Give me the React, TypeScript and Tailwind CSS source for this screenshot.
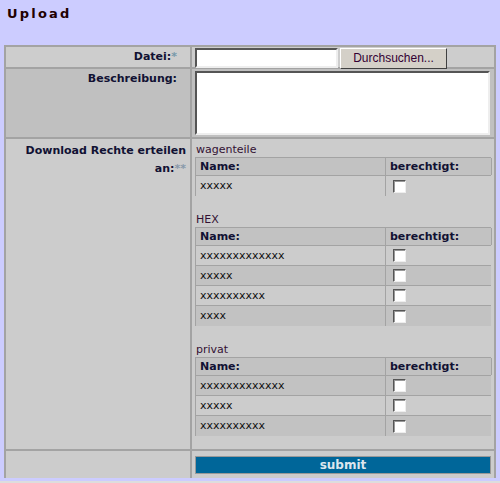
import React from "react";

const Cb = () => (
  <span className="block w-[13px] h-[13px] bg-white border border-t-[#555] border-l-[#555] border-b-[#eee] border-r-[#eee] shadow-[inset_1px_1px_0_#999]" />
);

type Row = { name: string; dark: boolean };

const Sub = ({ title, rows, mt }: { title: string; rows: Row[]; mt: string }) => (
  <div className={mt}>
    <div className="h-[15px] leading-[15px] text-[11px] text-[#331133] pl-[1px]">{title}</div>
    <div className="w-[296px] border-l border-t border-[#a3a3a3]">
      <div className="grid grid-cols-[190px_106px] h-[18px] bg-[#c2c2c2] border-b border-[#a3a3a3]">
        <div className="pl-[4px] text-[11px] font-bold leading-[17px] text-[#111133] border-r border-[#a3a3a3]">Name:</div>
        <div className="pl-[4px] text-[11px] font-bold leading-[17px] text-[#111133] border-r border-[#a3a3a3]">berechtigt:</div>
      </div>
      {rows.map((r, i) => (
        <div
          key={i}
          className={`grid grid-cols-[190px_106px] h-[20px] overflow-hidden ${r.dark ? "bg-[#c2c2c2]" : "bg-[#cccccc]"} ${i < rows.length - 1 ? "border-b border-[#a3a3a3]" : ""}`}
        >
          <div className="pl-[4px] text-[11px] leading-[19px] text-[#111] border-r border-[#a3a3a3]">{r.name}</div>
          <div className="pl-[7px] flex items-center border-r border-[#a3a3a3]">
            <Cb />
          </div>
        </div>
      ))}
    </div>
  </div>
);

export default function App() {
  return (
    <div className="w-[500px] h-[483px] bg-[#ccccff] font-['DejaVu_Sans',Verdana,sans-serif] overflow-hidden">
      <div className="h-[45px] pt-[4px] pl-[7px] text-[13px] font-bold tracking-[2.2px] text-[#220000]">Upload</div>
      <div className="ml-[4px] w-[492px] bg-[#cccccc] border-t-2 border-l-2 border-r-2 border-[#a3a3a3]">
        {/* Datei */}
        <div className="grid grid-cols-[186px_1fr] h-[22px] border-b-2 border-[#a3a3a3] bg-[#cdcdcd]">
          <div className="text-right pr-[13px] text-[11px] font-bold leading-[20px] text-[#111133] border-r-2 border-[#a3a3a3]">
            Datei:<span className="text-[#7799aa]">*</span>
          </div>
          <div className="flex items-start pl-[3px] pt-[1px] gap-[2px]">
            <div className="w-[143px] h-[20px] bg-white border-2 border-t-[#555] border-l-[#555] border-b-[#eee] border-r-[#eee]" />
            <div className="w-[107px] h-[21px] bg-[#d4d0c8] border border-t-[#fff] border-l-[#fff] border-b-[#404040] border-r-[#404040] font-['Liberation_Sans',Arial,sans-serif] text-[12px] leading-[19px] text-center text-[#330033]">
              Durchsuchen...
            </div>
          </div>
        </div>
        {/* Beschreibung */}
        <div className="grid grid-cols-[186px_1fr] h-[70px] border-b-2 border-[#a3a3a3] bg-[#c0c0c0]">
          <div className="text-right pr-[13px] pt-[2px] text-[11px] font-bold leading-[15px] text-[#111133] border-r-2 border-[#a3a3a3]">
            Beschreibung:
          </div>
          <div className="pl-[3px] pt-[2px]">
            <div className="w-[295px] h-[64px] bg-white border-2 border-t-[#555] border-l-[#555] border-b-[#eee] border-r-[#eee]" />
          </div>
        </div>
        {/* Rechte */}
        <div className="grid grid-cols-[186px_1fr] h-[312px] border-b-2 border-[#a3a3a3] bg-[#cccccc]">
          <div className="text-right pr-[4px] pt-[3px] text-[11px] font-bold leading-[18px] text-[#111133] border-r-2 border-[#a3a3a3]">
            Download Rechte erteilen an:<span className="text-[#8899aa]">**</span>
          </div>
          <div className="pl-[3px] pt-[3px]">
            <Sub title="wagenteile" mt="" rows={[{ name: "xxxxx", dark: false }]} />
            <Sub
              title="HEX"
              mt="mt-[16px]"
              rows={[
                { name: "xxxxxxxxxxxxx", dark: false },
                { name: "xxxxx", dark: true },
                { name: "xxxxxxxxxx", dark: false },
                { name: "xxxx", dark: true },
              ]}
            />
            <Sub
              title="privat"
              mt="mt-[16px]"
              rows={[
                { name: "xxxxxxxxxxxxx", dark: true },
                { name: "xxxxx", dark: false },
                { name: "xxxxxxxxxx", dark: true },
              ]}
            />
          </div>
        </div>
        {/* submit */}
        <div className="grid grid-cols-[186px_1fr] h-[27px] bg-[#cccccc]">
          <div className="border-r-2 border-[#a3a3a3]" />
          <div className="pl-[3px] pt-[5px]">
            <div className="w-[296px] h-[18px] bg-[#006699] border border-[#999] text-center text-[12px] font-bold leading-[16px] text-[#dde6ee]">
              submit
            </div>
          </div>
        </div>
      </div>
      <div className="mt-[3px] h-[3px] bg-[#dddddd]" />
    </div>
  );
}
